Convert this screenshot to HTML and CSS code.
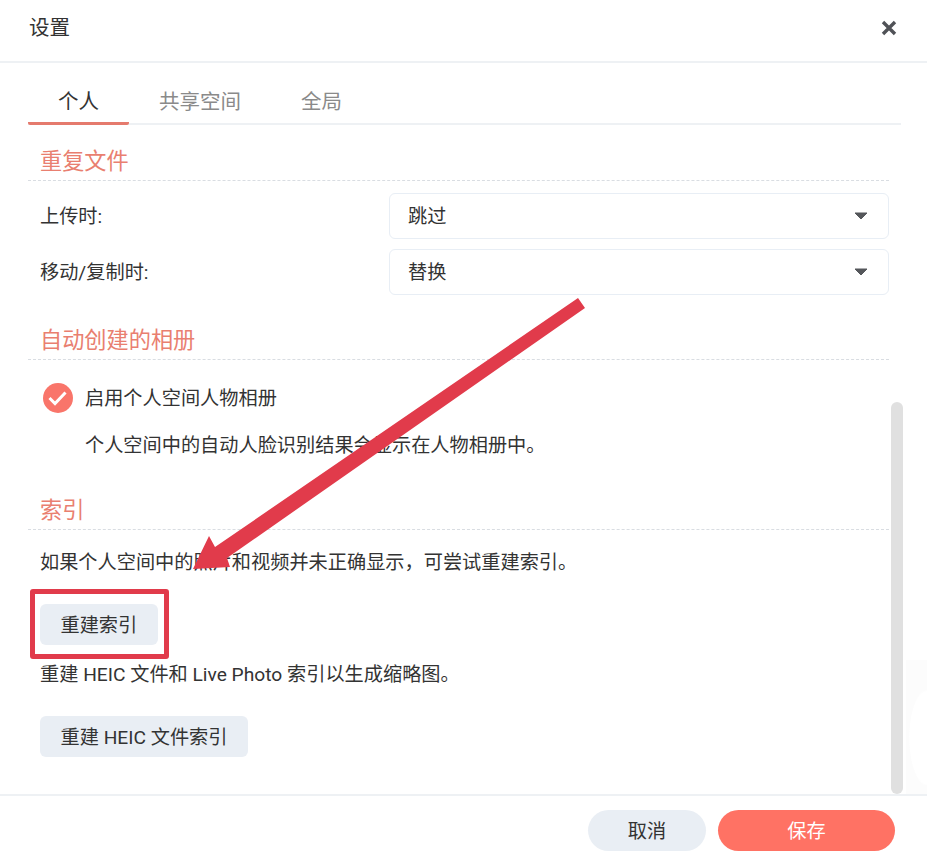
FILE: index.html
```html
<!DOCTYPE html>
<html lang="zh-CN">
<head>
<meta charset="utf-8">
<title>设置</title>
<link rel="stylesheet" href="styles.css">
</head>
<body>
<div class="dialog">
  <header class="head">
    <h1 class="title">设置</h1>
    <svg class="close" viewBox="0 0 16 16" width="16" height="16"><path d="M2 2 14 14M14 2 2 14" fill="none" stroke="#505257" stroke-width="3.4"/></svg>
  </header>
  <main class="body">
    <nav class="tabs">
      <span class="tab active">个人</span>
      <span class="tab">共享空间</span>
      <span class="tab">全局</span>
    </nav>
    <section class="section first">
      <h2 class="heading">重复文件</h2>
      <div class="form">
        <span class="label">上传时:</span>
        <div class="select">跳过<svg class="caret" viewBox="0 0 14 8" width="14" height="8"><path d="M1 1H13L7 7Z" fill="#55575b" stroke="#55575b" stroke-linejoin="round"/></svg></div>
        <span class="label">移动/复制时:</span>
        <div class="select">替换<svg class="caret" viewBox="0 0 14 8" width="14" height="8"><path d="M1 1H13L7 7Z" fill="#55575b" stroke="#55575b" stroke-linejoin="round"/></svg></div>
      </div>
    </section>
    <section class="section">
      <h2 class="heading">自动创建的相册</h2>
      <div class="check-row">
        <svg class="check" viewBox="0 0 30 30" width="30" height="30"><circle cx="15" cy="15" r="15" fill="#f9756a"/><path d="M6.5 15 12 20.5 22.5 9.5" fill="none" stroke="#fff" stroke-width="3"/></svg>
        <span class="check-label">启用个人空间人物相册</span>
      </div>
      <p class="note">个人空间中的自动人脸识别结果会显示在人物相册中。</p>
    </section>
    <section class="section index">
      <h2 class="heading">索引</h2>
      <p class="text">如果个人空间中的照片和视频并未正确显示，可尝试重建索引。</p>
      <button class="btn">重建索引</button>
      <p class="text tight">重建 HEIC 文件和 Live Photo 索引以生成缩略图。</p>
      <button class="btn">重建 HEIC 文件索引</button>
    </section>
    <div class="scrollbar"></div>
  </main>
  <footer class="foot">
    <button class="pill cancel">取消</button>
    <button class="pill save">保存</button>
  </footer>
</div>
<div class="edge-glow"></div>
<div class="mark-box"></div>
<svg class="mark-arrow" viewBox="0 0 927 864" width="927" height="864"><polygon points="578,298 585,308 227,558 230,567 193,569 209,536 215,547" fill="#e13b4b"/></svg>
</body>
</html>
```

FILE: styles.css
```css
* { box-sizing: border-box; }
html, body { margin: 0; padding: 0; background: #fff; }
body {
  width: 927px;
  height: 864px;
  overflow: hidden;
  position: relative;
  font-family: Roboto, "Noto Sans CJK SC", sans-serif;
  font-size: 19.2px;
  color: #333;
}
.dialog { height: 864px; display: flex; flex-direction: column; }
.head {
  height: 63px;
  flex: none;
  border-bottom: 2px solid #eef1f4;
  padding: 0 30px 6px 29px;
  display: flex;
  align-items: center;
  justify-content: space-between;
}
.title { margin: 0; font-size: 20.5px; font-weight: 400; line-height: 30px; color: #333; }
.close { display: block; }
.body { flex: 1; position: relative; padding: 0 26px 0 28px; overflow: hidden; }
.tabs {
  height: 62px;
  display: flex;
  align-items: flex-end;
  border-bottom: 2px solid #eef1f4;
}
.tab {
  height: 62px;
  padding: 24px 30px 0;
  font-size: 20.5px;
  line-height: 30px;
  color: #8a8a8a;
  margin-bottom: -2px;
}
.tab.active { width: 101px; color: #333; border-bottom: 3px solid #e57a6d; border-radius: 2px; }
.section { margin: 25px 12px 0 0; }
.section.first { margin-top: 16px; }
.section.index { margin-top: 29px; }
.heading {
  margin: 0;
  height: 40px;
  padding-left: 12px;
  font-size: 22.2px;
  font-weight: 400;
  line-height: 40px;
  color: #e97f70;
  border-bottom: 1px dashed #d9dde2;
}
.form {
  margin-top: 12px;
  display: grid;
  grid-template-columns: 361px 500px;
  row-gap: 10px;
  align-items: center;
}
.label { padding: 0 0 2px 12px; }
.select {
  height: 46px;
  border: 1px solid #e8eef5;
  border-radius: 6px;
  padding: 0 20px 2px 18px;
  display: flex;
  align-items: center;
  justify-content: space-between;
}
.caret { display: block; margin-top: 2px; }
.check-row {
  margin: 23px 0 0 15px;
  height: 30px;
  display: flex;
  align-items: center;
  gap: 12px;
}
.check { display: block; flex: none; }
.check-label { padding-bottom: 2px; }
.note { margin: 18px 0 0 57px; line-height: 30px; }
.text { margin: 18px 0 0 12px; line-height: 30px; }
.text.tight { margin-top: 15px; }
.btn {
  display: block;
  margin: 26px 0 0 12px;
  height: 41px;
  padding: 0 20.5px 2px;
  border: 0;
  border-radius: 6px;
  background: #e9eef4;
  font: inherit;
  color: #333;
}
.scrollbar {
  position: absolute;
  left: 891px;
  top: 339px;
  width: 12px;
  height: 392px;
  border-radius: 6px;
  background: #e0e0e0;
}
.foot {
  height: 70px;
  flex: none;
  border-top: 2px solid #eef1f4;
  padding: 14px 32px 0 0;
  display: flex;
  justify-content: flex-end;
  align-items: flex-start;
  gap: 12px;
}
.pill {
  height: 41px;
  border: 0;
  border-radius: 21px;
  padding: 0 0 2px;
  font: inherit;
}
.cancel { width: 118px; background: #e9eef4; color: #333; }
.save { width: 177px; background: #ff7264; color: #fff; }
.edge-glow {
  position: absolute;
  left: 906px;
  top: 660px;
  width: 21px;
  height: 134px;
  background: radial-gradient(ellipse 18px 48px at 100% 58%, #fff 96%, #fcfcfc 100%);
}
.mark-box {
  position: absolute;
  left: 30px;
  top: 589px;
  width: 139px;
  height: 70px;
  border: 5px solid #e13b4b;
  border-radius: 3px;
}
.mark-arrow { position: absolute; left: 0; top: 0; pointer-events: none; }
```
